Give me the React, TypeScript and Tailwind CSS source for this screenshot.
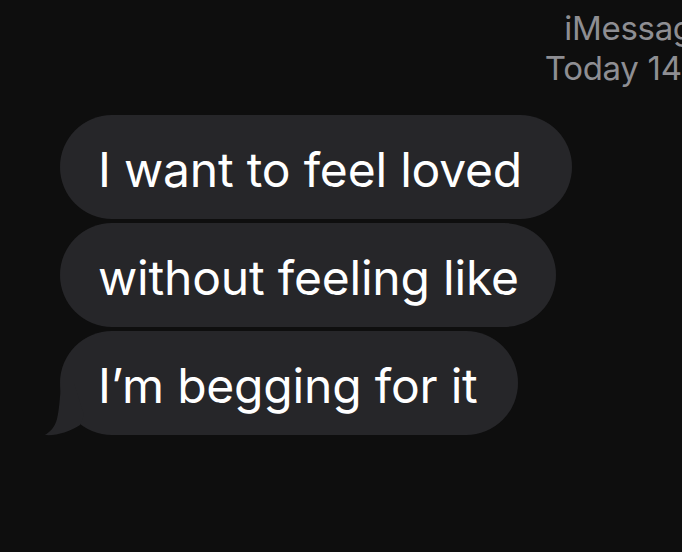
export default function App() {
  const bubble =
    "relative h-[104px] flex items-center rounded-full bg-[#262629] pl-[38px] pt-[5px] text-white text-[48px] tracking-[-0.2px] leading-none whitespace-nowrap";
  return (
    <div
      className="w-[682px] h-[552px] overflow-hidden bg-[#0e0e0e]"
      style={{ fontFamily: "Inter, 'Noto Sans', sans-serif" }}
    >
      <div className="ml-[488px] w-[300px] pt-[8px] text-center text-[#8e8e93] text-[33px] leading-[40px] tracking-[-0.3px]">
        <div>iMessage</div>
        <div>Today 14:36</div>
      </div>
      <div className="mt-[27px] ml-[60px] flex flex-col items-start gap-[4px]">
        <div className={`${bubble} w-[512px]`}>I want to feel loved</div>
        <div className={`${bubble} w-[496px]`}>without feeling like</div>
        <div className={`${bubble} w-[458px]`}>
          <svg
            className="absolute left-[-16px] top-[44px]"
            width="80"
            height="62"
            viewBox="0 0 80 62"
          >
            <path
              d="M17 8 C16 24 15 36 13 44 C11 52 6 57 1 60 C12 61 25 57 36 50 L40 40 L30 8 Z"
              fill="#262629"
            />
          </svg>
          <span className="relative">I’m begging for it</span>
        </div>
      </div>
    </div>
  );
}
